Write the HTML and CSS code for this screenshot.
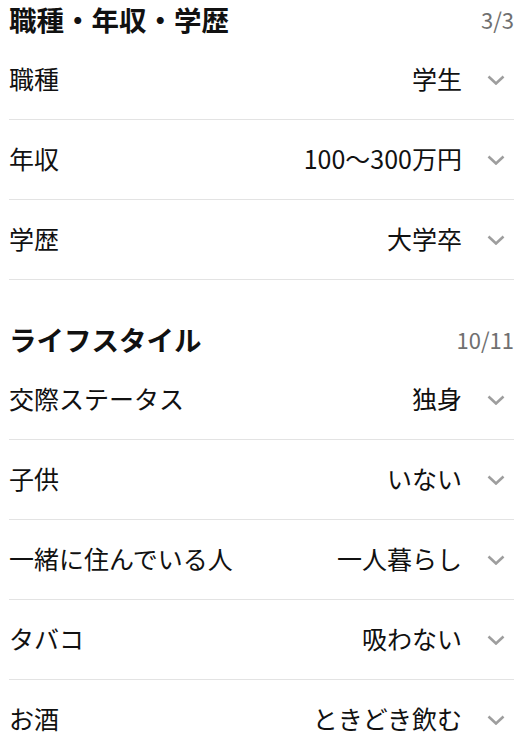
FILE: index.html
```html
<!DOCTYPE html>
<html lang="ja">
<head>
  <meta charset="UTF-8" />
  <meta name="viewport" content="width=device-width, initial-scale=1.0"/>
  <title>プロフィール</title>
  <link rel="stylesheet" href="styles.css">
</head>
<body>

<div class="profile">
  <!-- 職種・年収・学歴 -->
  <section class="group">
    <div class="group-head">
      <h2>職種・年収・学歴</h2>
      <span class="count">3/3</span>
    </div>
    <div class="row"><span class="label">職種</span><span class="value">学生</span><span class="chev"><svg viewBox="0 0 18 10" width="18" height="10"><path d="M1.5 1.5 L9 8.5 L16.5 1.5" /></svg></span></div>
    <div class="row"><span class="label">年収</span><span class="value">100～300万円</span><span class="chev"><svg viewBox="0 0 18 10" width="18" height="10"><path d="M1.5 1.5 L9 8.5 L16.5 1.5" /></svg></span></div>
    <div class="row"><span class="label">学歴</span><span class="value">大学卒</span><span class="chev"><svg viewBox="0 0 18 10" width="18" height="10"><path d="M1.5 1.5 L9 8.5 L16.5 1.5" /></svg></span></div>
  </section>

  <!-- ライフスタイル -->
  <section class="group">
    <div class="group-head">
      <h2>ライフスタイル</h2>
      <span class="count">10/11</span>
    </div>
    <div class="row"><span class="label">交際ステータス</span><span class="value">独身</span><span class="chev"><svg viewBox="0 0 18 10" width="18" height="10"><path d="M1.5 1.5 L9 8.5 L16.5 1.5" /></svg></span></div>
    <div class="row"><span class="label">子供</span><span class="value">いない</span><span class="chev"><svg viewBox="0 0 18 10" width="18" height="10"><path d="M1.5 1.5 L9 8.5 L16.5 1.5" /></svg></span></div>
    <div class="row"><span class="label">一緒に住んでいる人</span><span class="value">一人暮らし</span><span class="chev"><svg viewBox="0 0 18 10" width="18" height="10"><path d="M1.5 1.5 L9 8.5 L16.5 1.5" /></svg></span></div>
    <div class="row"><span class="label">タバコ</span><span class="value">吸わない</span><span class="chev"><svg viewBox="0 0 18 10" width="18" height="10"><path d="M1.5 1.5 L9 8.5 L16.5 1.5" /></svg></span></div>
    <div class="row"><span class="label">お酒</span><span class="value">ときどき飲む</span><span class="chev"><svg viewBox="0 0 18 10" width="18" height="10"><path d="M1.5 1.5 L9 8.5 L16.5 1.5" /></svg></span></div>
  </section>
</div>

</body>
</html>
```

FILE: styles.css
```css
* {
  margin: 0;
  padding: 0;
  box-sizing: border-box;
}

body {
  font-family: "Noto Sans CJK JP", "Noto Sans", sans-serif;
  background-color: #fff;
  color: #111;
}

.profile {
  padding: 0 15px 0 9px;
}

.group {
  display: flex;
  flex-direction: column;
  margin-bottom: 40px;
}

.group-head {
  display: flex;
  justify-content: space-between;
  align-items: center;
  height: 40px;
  padding-bottom: 2px;
}

.group-head h2 {
  font-size: 27.5px;
  font-weight: bold;
  color: #111;
  line-height: 1.2;
}

.count {
  font-size: 22px;
  color: #707070;
  line-height: 1.2;
}

.row {
  display: flex;
  align-items: center;
  height: 80px;
  border-bottom: 1px solid #e3e3e3;
  font-size: 25px;
  line-height: 1.2;
}

.label {
  flex: 1;
  padding-bottom: 4px;
}

.value {
  text-align: right;
  padding-bottom: 4px;
}

.chev {
  display: flex;
  margin: 0 9px 0 25px;
}

.chev path {
  fill: none;
  stroke: #9e9e9e;
  stroke-width: 2.6;
}
```
